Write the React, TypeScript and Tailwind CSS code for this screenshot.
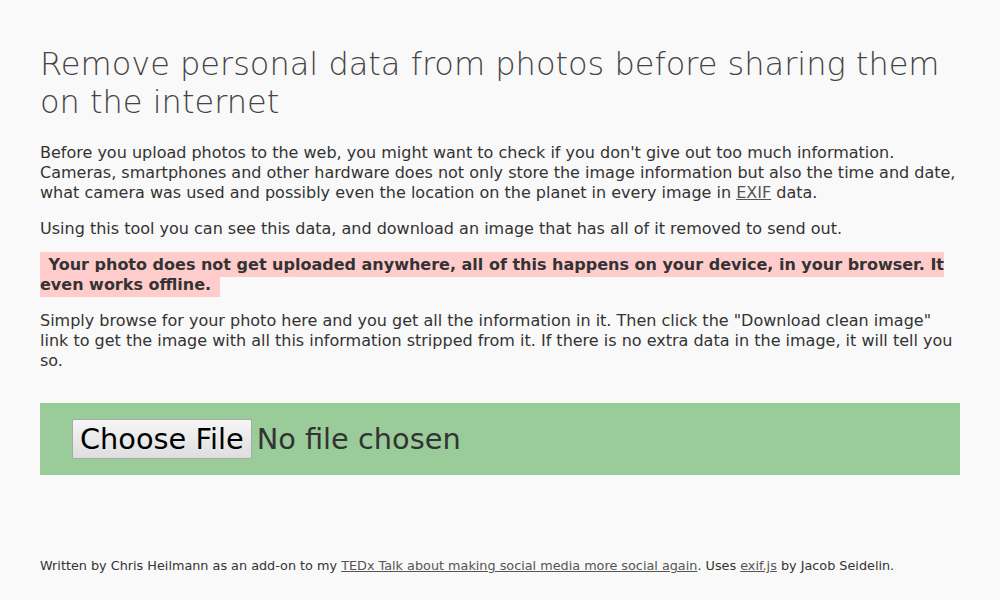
import React from "react";

export default function App() {
  return (
    <div
      className="min-h-[600px] bg-[#f9f9f9] px-[40px] pt-[45px] text-[#333] text-[16px] leading-[20px]"
      style={{ fontFamily: '"DejaVu Sans", sans-serif' }}
    >
      <h1 className="text-[32px] leading-[38px] font-light text-[#444]">
        Remove personal data from photos before sharing them on the internet
      </h1>
      <p className="mt-[22px]">
        Before you upload photos to the web, you might want to check if you don't give out too much information.
        Cameras, smartphones and other hardware does not only store the image information but also the time and date,
        what camera was used and possibly even the location on the planet in every image in{" "}
        <a href="#" className="underline text-[#555]">EXIF</a> data.
      </p>
      <p className="mt-[16px]">
        Using this tool you can see this data, and download an image that has all of it removed to send out.
      </p>
      <p className="mt-[16px]">
        <strong className="font-bold bg-[#ffcccc] px-[3px] py-[3px]">
          {"\u00a0Your photo does not get uploaded anywhere, all of this happens on your device, in your browser. It even works offline.\u00a0"}
        </strong>
      </p>
      <p className="mt-[16px]">
        Simply browse for your photo here and you get all the information in it. Then click the "Download clean image"
        link to get the image with all this information stripped from it. If there is no extra data in the image, it will
        tell you so.
      </p>
      <div className="mt-[32px] bg-[#99cc99] px-[32px] py-[16px] flex items-center">
        <input
          type="file"
          className="text-[28.8px] leading-[normal] text-[#333] file:text-black file:bg-gradient-to-b file:from-[#f6f6f6] file:to-[#dedede] file:border file:border-solid file:border-[#a9a9a9] file:rounded-[2px] file:px-[7px] file:py-[2px] file:mr-[5px]"
          style={{ fontFamily: '"DejaVu Sans", sans-serif' }}
        />
      </div>
      <footer className="mt-[83px] text-[12.8px] leading-[16px]">
        Written by Chris Heilmann as an add-on to my{" "}
        <a href="#" className="underline text-[#555]">TEDx Talk about making social media more social again</a>. Uses{" "}
        <a href="#" className="underline text-[#555]">exif.js</a> by Jacob Seidelin.
      </footer>
    </div>
  );
}
